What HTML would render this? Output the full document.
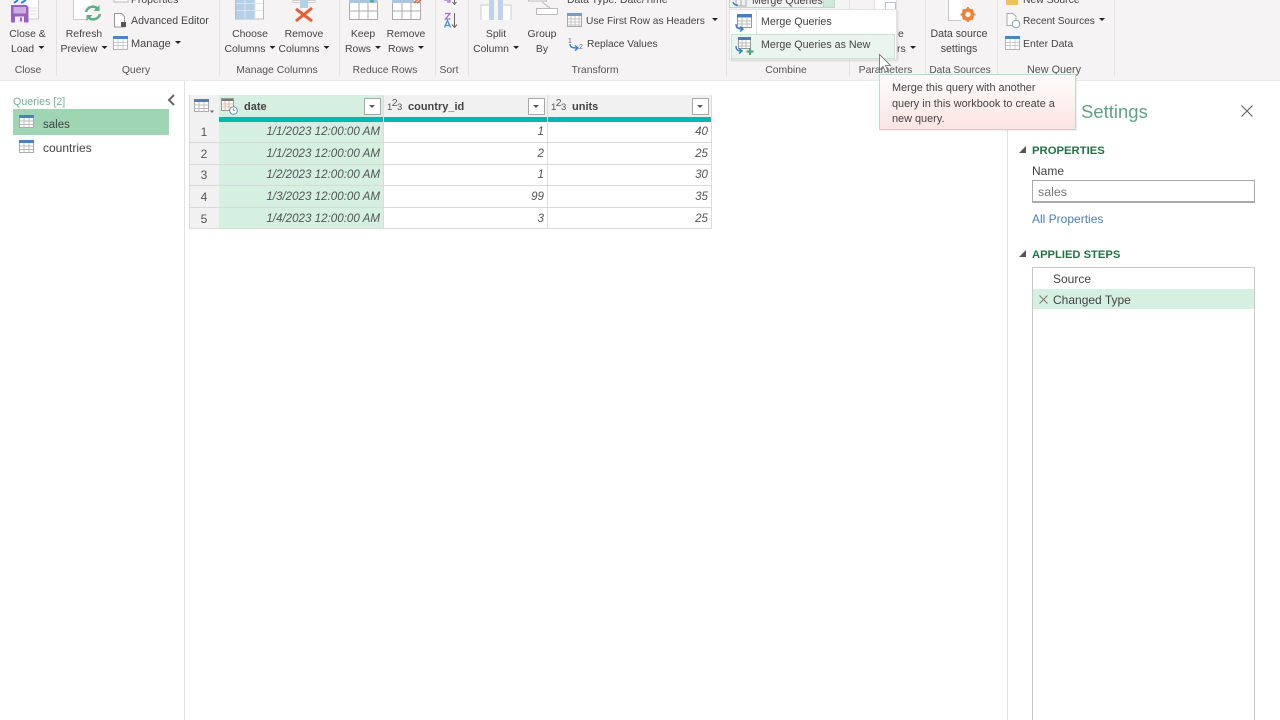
<!DOCTYPE html>
<html><head><meta charset="utf-8">
<style>
html,body{margin:0;padding:0;width:1280px;height:720px;overflow:hidden;background:#fff}
body{font-family:"Liberation Sans",sans-serif;font-size:10.4px;color:#444;position:relative;filter:blur(.3px)}
.a{position:absolute}
.t{position:absolute;white-space:nowrap;line-height:14px;color:#444;font-size:10.4px}
.c{transform:translateX(-50%);text-align:center}
.sep{position:absolute;top:0;width:1px;height:76px;background:#e4e2e3}
.tri{display:inline-block;width:0;height:0;border-left:3px solid transparent;border-right:3px solid transparent;border-top:3px solid #222;vertical-align:3px;margin-left:4px}
.cell{position:absolute;font-style:italic;color:#555;font-size:11.6px;line-height:14px;text-align:right;white-space:nowrap}
.rn{position:absolute;left:189px;width:30px;text-align:center;font-size:12px;line-height:14px;color:#555}
.hl{position:absolute;height:1px;background:#d9d9d9;left:189px;width:523px}
.fb{position:absolute;top:98px;width:15px;height:15px;background:#fff;border:1px solid #a8a8a8}
.fb:after{content:"";position:absolute;left:4px;top:6px;border-left:3.5px solid transparent;border-right:3.5px solid transparent;border-top:3.5px solid #555}
svg{position:absolute;overflow:visible}
.n23{position:absolute;top:101px;font-size:9.5px;color:#555;line-height:14px;letter-spacing:-.6px}
.n23 sup{font-size:10.500px;vertical-align:4px;line-height:0}
.h{position:absolute;white-space:nowrap;top:100px;font-weight:bold;color:#444;font-size:11px;line-height:14px}
</style></head><body>

<!-- ribbon -->
<div class="a" style="left:0;top:0;width:1280px;height:80px;background:#f5f3f4;border-bottom:1px solid #ebe9ea"></div>
<div class="sep" style="left:56px"></div><div class="sep" style="left:219px"></div><div class="sep" style="left:339px"></div>
<div class="sep" style="left:435px"></div><div class="sep" style="left:468px"></div><div class="sep" style="left:726px"></div>
<div class="sep" style="left:849px"></div><div class="sep" style="left:925px"></div><div class="sep" style="left:997px"></div><div class="sep" style="left:1114px"></div>

<!-- close & load icon -->
<svg style="left:0;top:0" width="60" height="30"><path d="M24 0V19H38.500V0" fill="#fff" stroke="#ccc"/><path d="M29 8h8M29 11h8M29 14h8" stroke="#ddd"/><path d="M14 3l4-3M21 3l5-3" stroke="#2b7cd3" stroke-width="1.800"/><path d="M11 5H26.500l2 2v15.500H11z" fill="#9b5fc0"/><rect x="13.500" y="7" width="12.500" height="6.500" fill="#c9aee0"/><rect x="15" y="16.500" width="9" height="6" fill="#f5eefa"/><rect x="20" y="17.500" width="2" height="4" fill="#9b5fc0"/></svg>
<div class="t c" style="left:27.500px;top:28px">Close &amp;</div>
<div class="t c" style="left:27.500px;top:43px">Load<i class="tri"></i></div>
<div class="t c" style="left:28px;top:64px;color:#555">Close</div>

<!-- refresh -->
<svg style="left:70px;top:0" width="40" height="26"><rect x="3.500" y="-2" width="18" height="21.500" fill="#fff"/><path d="M3.500 0v19.500H17" fill="none" stroke="#ccc"/><path d="M16 12a7 7 0 0 1 12-3" fill="none" stroke="#5fae8a" stroke-width="2.600"/><path d="M30 14a7 7 0 0 1-12 3" fill="none" stroke="#5fae8a" stroke-width="2.600"/><path d="M29.500 5v6h-6zM16.500 21v-6h6z" fill="#5fae8a"/></svg>
<div class="t c" style="left:84px;top:28px">Refresh</div>
<div class="t c" style="left:84px;top:43px">Preview<i class="tri"></i></div>

<svg style="left:113px;top:0" width="20" height="52"><rect x="1" y="-6" width="14" height="8" fill="#fff" stroke="#bbb"/><path d="M1.500 13.500h7l3 3v10.500h-10z" fill="#fff" stroke="#999"/><rect x="8" y="22" width="5" height="5" fill="#555"/><rect x=".5" y="38.500" width="14" height="11" fill="#fff" stroke="#b5b5b5"/><rect x="0" y="36" width="15" height="3" fill="#4a86c5"/><path d="M5 39v10M10 39v10M1 42.500h13M1 45.500h13" stroke="#ccc"/></svg>
<div class="t" style="left:131px;top:-6px">Properties</div>
<div class="t" style="left:131px;top:14px;font-size:10.600px">Advanced Editor</div>
<div class="t" style="left:131px;top:37px;font-size:11px">Manage<i class="tri"></i></div>
<div class="t c" style="left:136px;top:64px;color:#555">Query</div>

<!-- choose columns -->
<svg style="left:235px;top:0" width="30" height="20"><rect x=".5" y="-4" width="28" height="23" fill="#fff" stroke="#bbb"/><rect x="1" y="-4" width="19" height="23" fill="#b6cfe8"/><path d="M10 -4v23M20 -4v23M1 3.500h27M1 10.500h27" stroke="#d8e4ef"/></svg>
<div class="t c" style="left:250px;top:28px">Choose</div>
<div class="t c" style="left:250px;top:43px">Columns<i class="tri"></i></div>

<!-- remove columns -->
<svg style="left:290px;top:0" width="30" height="24"><path d="M3 .5h22v2H3z" fill="#fff" stroke="#ccc"/><rect x="10" y="0" width="8" height="8" fill="#b6cfe8"/><path d="M6 9l16 12M22 8L6 21" stroke="#e2603a" stroke-width="3"/></svg>
<div class="t c" style="left:304px;top:28px">Remove</div>
<div class="t c" style="left:304px;top:43px">Columns<i class="tri"></i></div>
<div class="t c" style="left:277px;top:64px;color:#555">Manage Columns</div>

<!-- keep rows / remove rows -->
<svg style="left:349px;top:0" width="30" height="20"><rect x=".5" y="2.500" width="28" height="17" fill="#fff" stroke="#aaa"/><rect x="0" y="0" width="29" height="3" fill="#a9c5e2"/><rect x="21" y="0" width="4" height="2.500" fill="#5fae8a"/><path d="M10 3v16M19 3v16M1 11h27" stroke="#aaa"/></svg>
<div class="t c" style="left:363px;top:28px">Keep</div>
<div class="t c" style="left:363px;top:43px">Rows<i class="tri"></i></div>
<svg style="left:392px;top:0" width="30" height="20"><rect x=".5" y="2.500" width="28" height="17" fill="#fff" stroke="#aaa"/><rect x="0" y="0" width="22" height="3" fill="#a9c5e2"/><path d="M22 3l3-3M25 3l4-3" stroke="#e2603a" stroke-width="1.500"/><path d="M10 3v16M19 3v16M1 11h27" stroke="#aaa"/></svg>
<div class="t c" style="left:406px;top:28px">Remove</div>
<div class="t c" style="left:406px;top:43px">Rows<i class="tri"></i></div>
<div class="t c" style="left:385px;top:64px;color:#555">Reduce Rows</div>

<!-- sort -->
<svg style="left:443px;top:0" width="18" height="30"><path d="M1 0h6v2H4" fill="none" stroke="#9b6fc8" stroke-width="1.200"/><path d="M11.500 -1v5M9.500 2l2 2.500 2-2.500" fill="none" stroke="#666"/><path d="M2 13.500h5L2.500 19H7.500" fill="none" stroke="#9b6fc8" stroke-width="1.300"/><path d="M1.500 27.500L4.500 20.500L7.500 27.500M2.500 25.500h4" fill="none" stroke="#4a8fd0" stroke-width="1.300"/><path d="M11.500 13v14M9 24.500l2.500 3 2.500-3" fill="none" stroke="#666"/></svg>
<div class="t c" style="left:449px;top:64px;color:#555">Sort</div>

<!-- split column -->
<svg style="left:480px;top:0" width="32" height="20"><path d="M1 20V5h10v15M21 20V5h10v15" fill="#fff" stroke="#ccc"/><rect x="9" y="0" width="5" height="20" fill="#bcd3ea"/><rect x="18" y="0" width="5" height="20" fill="#bcd3ea"/></svg>
<div class="t c" style="left:496px;top:28px">Split</div>
<div class="t c" style="left:496px;top:43px">Column<i class="tri"></i></div>

<!-- group by -->
<svg style="left:527px;top:0" width="32" height="16"><rect x="1.500" y="-4" width="18" height="5" fill="#fff" stroke="#bbb"/><path d="M15 2l8 6" stroke="#bbb"/><rect x="9.500" y="8.500" width="21" height="6" fill="#fff" stroke="#bbb"/></svg>
<div class="t c" style="left:542px;top:28px">Group</div>
<div class="t c" style="left:542px;top:43px">By</div>

<div class="t" style="left:567px;top:-6px">Data Type: Date/Time</div>
<svg style="left:567px;top:13px" width="16" height="15"><rect x=".5" y=".5" width="14" height="13" fill="#fff" stroke="#aaa"/><rect x="0" y="0" width="15" height="3" fill="#7a9cc0"/><path d="M4 3v10M8 3v10M12 3v10M1 6h13M1 9h13M1 12h13" stroke="#c4c4c4"/></svg>
<div class="t" style="left:586px;top:15px;font-size:10.200px">Use First Row as Headers<i class="tri" style="margin-left:7px"></i></div>
<svg style="left:568px;top:36px" width="16" height="15"><text x="0" y="7" font-size="7" font-family="Liberation Sans" fill="#666">1</text><text x="11" y="13" font-size="7" font-family="Liberation Sans" fill="#666">2</text><path d="M2 8c0 3 2 4 7 4M7 9.500l3 2.500-3 2.500" fill="none" stroke="#2b7cd3" stroke-width="1.300"/></svg>
<div class="t" style="left:587px;top:38px;font-size:10.200px">Replace Values</div>
<div class="t c" style="left:595px;top:64px;color:#555">Transform</div>

<!-- partly hidden buttons under dropdown -->
<div class="a" style="left:729px;top:-2px;width:106px;height:10px;border:1px solid #b9d9c9;background:#f2f2f2;box-sizing:border-box"></div>
<div class="a" style="left:823px;top:-2px;width:12px;height:10px;background:#cfe8da;border:1px solid #b9d9c9;box-sizing:border-box"></div>
<svg style="left:732px;top:0" width="16" height="8"><path d="M4 0v6h10V0M9 0v6" fill="none" stroke="#aaa"/><path d="M1 2c1 3 3 3 5 3" fill="none" stroke="#2b7cd3" stroke-width="1.300"/></svg>
<div class="t" style="left:752px;top:-6px;font-size:10.700px">Merge Queries</div>
<div class="t c" style="left:786px;top:64px;color:#555">Combine</div>

<!-- parameters -->
<svg style="left:874px;top:0" width="24" height="12"><rect x=".5" y="-4" width="22" height="14" fill="#fff" stroke="#ddd"/><rect x="11.500" y="2.500" width="10" height="10" fill="#fff" stroke="#a9c5e2"/></svg>
<div class="t" style="left:898px;top:28px">e</div>
<div class="t" style="left:897px;top:43px">rs<i class="tri"></i></div>
<div class="t c" style="left:885.500px;top:64px;color:#555">Parameters</div>

<!-- data source -->
<svg style="left:948px;top:0" width="34" height="24"><rect x="1" y="-2" width="13" height="22" fill="#fff"/><path d="M.5 0v20.500H13" fill="none" stroke="#c8c8c8"/><circle cx="20" cy="14.500" r="4.800" fill="none" stroke="#e8853a" stroke-width="3"/><path d="M20 7v15M12.500 14.500h15M15 9.500l10 10M25 9.500l-10 10" stroke="#e8853a" stroke-width="2"/><circle cx="20" cy="14.500" r="2.500" fill="#fff"/></svg>
<div class="t c" style="left:959px;top:27px;font-size:10.600px">Data source</div>
<div class="t c" style="left:959px;top:42px;font-size:10.600px">settings</div>
<div class="t c" style="left:960px;top:64px;color:#555;font-size:10.150px">Data Sources</div>

<!-- new query -->
<svg style="left:1005px;top:0" width="16" height="52"><rect x="1" y="-5" width="12" height="10" fill="#f0c060"/><path d="M2 13.500h6l3 3v9H2z" fill="#fff" stroke="#aaa"/><circle cx="11" cy="24" r="3.800" fill="#fff" stroke="#7a9cc0"/><rect x=".5" y="38.500" width="14" height="11" fill="#fff" stroke="#b5b5b5"/><rect x="0" y="36" width="15" height="3" fill="#4a86c5"/><path d="M5 39v10M10 39v10M1 42.500h13M1 45.500h13" stroke="#ccc"/></svg>
<div class="t" style="left:1023px;top:-6px">New Source</div>
<div class="t" style="left:1023px;top:15px;font-size:10.100px">Recent Sources<i class="tri"></i></div>
<div class="t" style="left:1023px;top:37px;font-size:10.500px">Enter Data</div>
<div class="t c" style="left:1054px;top:63px;color:#555;font-size:10.800px">New Query</div>

<!-- dropdown -->
<div class="a" style="left:729px;top:9px;width:168px;height:51px;background:#fff;border:1px solid #e3e3e3;box-sizing:border-box;box-shadow:1px 1px 2px rgba(0,0,0,.12)"></div>
<div class="a" style="left:756px;top:10px;width:1px;height:24px;background:#e0e0e0"></div>
<div class="a" style="left:731px;top:34px;width:164px;height:25px;background:#ebf5f0;border:1px solid #c5e2d3;box-sizing:border-box"></div>
<svg style="left:735px;top:14px" width="20" height="44"><rect x="2.500" y=".5" width="14" height="13" fill="#fff" stroke="#999"/><rect x="2" y="0" width="15" height="3.500" fill="#4a7fb5"/><path d="M7 4v9M12 4v9M3 7h13M3 10h13" stroke="#bbb"/><path d="M1 10c0 4 2 5 6 5M5 12.500l3 2.500-3 2.500" fill="none" stroke="#2b7cd3" stroke-width="1.400"/><rect x="3.500" y="23.500" width="12" height="11" fill="#fff" stroke="#999"/><rect x="3" y="23" width="13" height="3" fill="#4a7fb5"/><path d="M7 26v8M11 26v8M4 29h11M4 32h11" stroke="#bbb"/><path d="M1 32c0 4 2 5 5 5M4 34.500l3 2.500-3 2.500" fill="none" stroke="#2b7cd3" stroke-width="1.400"/><path d="M15 34v7M11.500 37.500h7" stroke="#4aa37c" stroke-width="2"/></svg>
<div class="t" style="left:761px;top:14.500px;font-size:10.700px">Merge Queries</div>
<div class="t" style="left:761px;top:38px;font-size:10.700px">Merge Queries as New</div>

<!-- cursor -->
<svg style="left:879px;top:54px" width="14" height="20"><path d="M.5.500V16l3.500-3.500 2.500 5.500 2.500-1-2.500-5.500h5z" fill="#fff" stroke="#666" stroke-width=".8"/></svg>

<!-- left pane -->
<div class="t" style="left:13px;top:95px;color:#78b095;font-size:10.700px">Queries [2]</div>
<svg style="left:166px;top:94px" width="10" height="12"><path d="M8 1L3 6l5 5" fill="none" stroke="#666" stroke-width="2"/></svg>
<div class="a" style="left:13px;top:109px;width:156px;height:26px;background:#a0d5b4"></div>
<svg style="left:19px;top:115px" width="16" height="14"><rect x=".5" y=".5" width="14" height="12" fill="#fff" stroke="#aaa"/><rect x="0" y="0" width="15" height="3" fill="#4a7fc0"/><path d="M5 3v10M10 3v10M1 6h13M1 9.500h13" stroke="#bbb"/></svg>
<div class="t" style="left:43px;top:118px;font-size:11.500px">sales</div>
<svg style="left:19px;top:140px" width="16" height="14"><rect x=".5" y=".5" width="14" height="12" fill="#fff" stroke="#aaa"/><rect x="0" y="0" width="15" height="3" fill="#4a7fc0"/><path d="M5 3v10M10 3v10M1 6h13M1 9.500h13" stroke="#bbb"/></svg>
<div class="t" style="left:43px;top:141px;font-size:12px">countries</div>
<div class="a" style="left:184px;top:81px;width:1px;height:639px;background:#e2e2e2"></div>

<!-- table -->
<div class="a" style="left:189px;top:95px;width:523px;height:22px;background:#f1f1f1"></div>
<div class="a" style="left:219px;top:95px;width:164px;height:22px;background:#d5efe1"></div>
<div class="a" style="left:189px;top:117px;width:30px;height:112px;background:#f1f1f1"></div>
<div class="a" style="left:219px;top:122px;width:164px;height:107px;background:#d5efe1"></div>
<div class="a" style="left:219px;top:117px;width:493px;height:5px;background:#01b8aa"></div>
<div class="a" style="left:383px;top:95px;width:1px;height:134px;background:#dcdcdc"></div>
<div class="a" style="left:547px;top:95px;width:1px;height:134px;background:#dcdcdc"></div>
<div class="a" style="left:711px;top:95px;width:1px;height:134px;background:#dcdcdc"></div>
<div class="a" style="left:189px;top:95px;width:1px;height:134px;background:#dcdcdc"></div>
<div class="hl" style="top:142px"></div><div class="hl" style="top:164px"></div><div class="hl" style="top:185px"></div><div class="hl" style="top:207px"></div><div class="hl" style="top:228px"></div>

<svg style="left:194px;top:99px" width="22" height="16"><rect x=".5" y=".5" width="14" height="12" fill="#fff" stroke="#aaa"/><rect x="0" y="0" width="15" height="3" fill="#4a7fc0"/><path d="M5 3v10M10 3v10M1 6h13M1 9.500h13" stroke="#bbb"/><path d="M16 11.500h4l-2 2.500z" fill="#666"/></svg>
<svg style="left:221px;top:98px" width="18" height="18"><rect x=".5" y=".5" width="12" height="12" fill="#fff" stroke="#999"/><rect x="1" y="1" width="11" height="2" fill="#777"/><path d="M4 3v9M8 3v9M1 6h11M1 9h11" stroke="#e8b8a0"/><circle cx="12.500" cy="12.500" r="3.800" fill="#fff" stroke="#6a8db0"/><path d="M12.500 10.500v2h1.500" fill="none" stroke="#6a8db0" stroke-width=".8"/></svg>
<div class="h" style="left:244px">date</div>
<div class="fb" style="left:364px"></div>
<div class="n23" style="left:387px">1<sup>2</sup>3</div>
<div class="h" style="left:408px">country_id</div>
<div class="fb" style="left:528px"></div>
<div class="n23" style="left:551px">1<sup>2</sup>3</div>
<div class="h" style="left:572px">units</div>
<div class="fb" style="left:692px"></div>

<div class="rn" style="top:125px">1</div><div class="rn" style="top:147px">2</div><div class="rn" style="top:168px">3</div><div class="rn" style="top:190px">4</div><div class="rn" style="top:212px">5</div>

<div class="cell" style="right:900px;top:125px">1/1/2023 12:00:00 AM</div>
<div class="cell" style="right:900px;top:147px">1/1/2023 12:00:00 AM</div>
<div class="cell" style="right:900px;top:168px">1/2/2023 12:00:00 AM</div>
<div class="cell" style="right:900px;top:190px">1/3/2023 12:00:00 AM</div>
<div class="cell" style="right:900px;top:212px">1/4/2023 12:00:00 AM</div>

<div class="cell" style="right:736px;top:125px">1</div>
<div class="cell" style="right:736px;top:147px">2</div>
<div class="cell" style="right:736px;top:168px">1</div>
<div class="cell" style="right:736px;top:190px">99</div>
<div class="cell" style="right:736px;top:212px">3</div>

<div class="cell" style="right:572px;top:125px">40</div>
<div class="cell" style="right:572px;top:147px">25</div>
<div class="cell" style="right:572px;top:168px">30</div>
<div class="cell" style="right:572px;top:190px">35</div>
<div class="cell" style="right:572px;top:212px">25</div>

<!-- right pane -->
<div class="a" style="left:1007px;top:81px;width:1px;height:639px;background:#e2e2e2"></div>
<div class="t" style="left:1081px;top:99px;font-size:18.500px;line-height:26px;color:#5ea386">Settings</div>
<svg style="left:1241px;top:105px" width="12" height="12"><path d="M.5.500l11 11M11.500.500l-11 11" stroke="#666" stroke-width="1.200"/></svg>

<svg style="left:1019px;top:146px" width="8" height="8"><path d="M7 0v7H0z" fill="#555"/></svg>
<div class="t" style="left:1032px;top:144px;font-weight:bold;font-size:11.300px;color:#217346">PROPERTIES</div>
<div class="t" style="left:1032px;top:164px;font-size:12px">Name</div>
<div class="a" style="left:1032px;top:180px;width:223px;height:23px;border:1px solid #aaa;border-bottom-width:2px;border-right-width:1.500px;box-sizing:border-box;background:#fff"></div>
<div class="t" style="left:1038px;top:185px;color:#777;font-size:12.400px">sales</div>
<div class="t" style="left:1032px;top:212px;font-size:12px;color:#4a7fb5">All Properties</div>

<svg style="left:1019px;top:250px" width="8" height="8"><path d="M7 0v7H0z" fill="#555"/></svg>
<div class="t" style="left:1032px;top:248px;font-weight:bold;font-size:11.200px;color:#217346">APPLIED STEPS</div>
<div class="a" style="left:1032px;top:267px;width:223px;height:460px;border:1px solid #c8c8c8;box-sizing:border-box;background:#fff"></div>
<div class="a" style="left:1033px;top:289px;width:221px;height:20px;background:#d5efe1"></div>
<div class="t" style="left:1053px;top:272px;font-size:12px">Source</div>
<svg style="left:1039px;top:295px" width="10" height="9"><path d="M.5.500l8 8M8.500.500l-8 8" stroke="#777" stroke-width="1"/></svg>
<div class="t" style="left:1053px;top:293px;font-size:12px">Changed Type</div>

<!-- tooltip -->
<div class="a" style="left:879px;top:74px;width:197px;height:56px;box-sizing:border-box;border:1px solid #bcdccb;background:linear-gradient(#fffdfc,#fbe4e2);box-shadow:1px 1px 1px rgba(0,0,0,.08)"></div>
<div class="t" style="left:892px;top:81px;line-height:15.500px;font-size:10.900px">Merge this query with another<br>query in this workbook to create a<br>new query.</div>

</body></html>
